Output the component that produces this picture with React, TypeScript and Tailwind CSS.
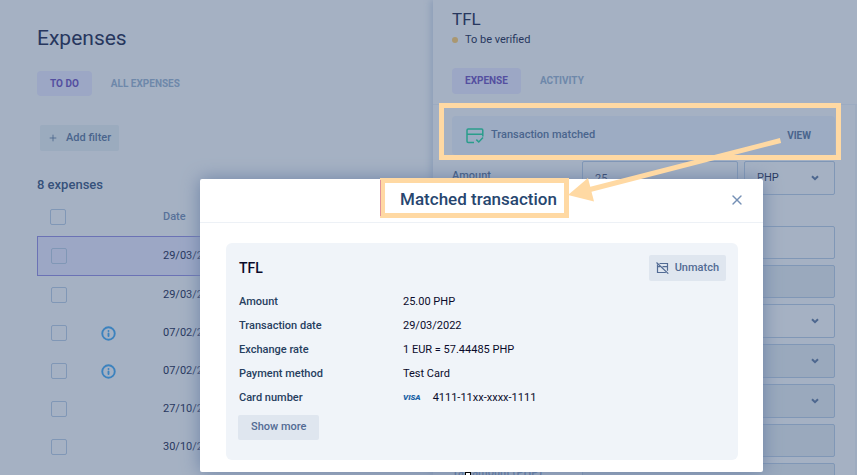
import React from 'react'
import { FiInfo, FiPlus, FiX } from 'react-icons/fi'

const expenses = [
  { id: 1, date: '29/03/2022', info: false, selected: true },
  { id: 2, date: '29/03/2022', info: false, selected: false },
  { id: 3, date: '07/02/2022', info: true, selected: false },
  { id: 4, date: '07/02/2022', info: true, selected: false },
  { id: 5, date: '27/10/2021', info: false, selected: false },
  { id: 6, date: '30/10/2021', info: false, selected: false },
]

const details = [
  { label: 'Amount', value: '25.00 PHP' },
  { label: 'Transaction date', value: '29/03/2022' },
  { label: 'Exchange rate', value: '1 EUR = 57.44485 PHP' },
  { label: 'Payment method', value: 'Test Card' },
]

const fields = [
  { id: 'merchant', name: 'Merchant', type: 'input', muted: false },
  { id: 'country', name: 'Country', type: 'input', muted: true },
  { id: 'category', name: 'Category', type: 'select', muted: false },
  { id: 'project', name: 'Project', type: 'select', muted: true },
  { id: 'tax', name: 'Tax rate', type: 'select', muted: true },
  { id: 'net', name: 'Net amount', type: 'input', muted: true },
]

function Checkbox({ label }: { label: string }) {
  return (
    <input
      type="checkbox"
      aria-label={label}
      className="block size-4 appearance-none rounded-xs border border-[#8097b6]"
    />
  )
}

interface SelectProps {
  id: string
  label: string
  value?: string
  muted: boolean
}

function Select({ id, label, value = '', muted }: SelectProps) {
  return (
    <div className="relative w-full">
      <select
        id={id}
        aria-label={label}
        className={`block h-[34px] w-full appearance-none rounded-xs border border-[#8097b6] px-3 text-[11px] text-[#27375e] ${muted ? 'bg-[#9aa9bd]' : ''}`}
      >
        <option>{value}</option>
      </select>
      <svg
        width="8"
        height="6"
        viewBox="0 0 8 6"
        fill="none"
        stroke="#4d678f"
        strokeWidth="2"
        className="pointer-events-none absolute top-[14px] right-4"
      >
        <path d="M1 1.200L4 4.200L7 1.200" />
      </svg>
    </div>
  )
}

function ExpenseList() {
  return (
    <main className="flex min-w-0 flex-1 flex-col pt-6 pl-[37px]">
      <h1 className="text-[21px] leading-7 text-[#27375e]">Expenses</h1>
      <nav className="mt-[19px] flex items-center gap-[6px] text-[10px] leading-[25px] font-bold">
        <button className="rounded-sm bg-[#9ca7c5] px-[13px] text-[#544fa0]">TO DO</button>
        <button className="px-[13px] text-[#6e88aa]">ALL EXPENSES</button>
      </nav>
      <button className="mt-[29px] ml-[3px] flex h-[26px] items-center gap-2 self-start rounded-xs bg-[#9babbe] px-2 text-[11px] font-medium text-[#4a658d]">
        <FiPlus size={10} />
        Add filter
      </button>
      <p className="mt-[25px] text-[13px] leading-[18px] font-medium text-[#36517b]">8 expenses</p>

      <table className="mt-1 w-full table-fixed border-collapse text-left text-[11px]">
        <colgroup>
          <col className="w-[64px]" />
          <col className="w-[62px]" />
          <col />
        </colgroup>
        <thead>
          <tr className="h-[38px]">
            <th className="pl-[13px]"><Checkbox label="Select all expenses" /></th>
            <th></th>
            <th className="font-medium text-[#58719a]">Date</th>
          </tr>
        </thead>
        <tbody>
          {expenses.map((e) => (
            <tr
              key={e.id}
              className={e.selected ? 'h-10 bg-[#9ca7c5] outline outline-1 -outline-offset-1 outline-[#6b72b5]' : 'h-[38px]'}
            >
              <td className="pl-[14px]"><Checkbox label={`Select expense ${e.id}`} /></td>
              <td>{e.info && <FiInfo size={15} strokeWidth={3} className="text-[#3c82be]" />}</td>
              <td className="text-[#27375e]">{e.date}</td>
            </tr>
          ))}
        </tbody>
      </table>
    </main>
  )
}

function MatchedIcon() {
  return (
    <svg width="18" height="16" viewBox="0 0 18 16" fill="none" stroke="#2a9d8c" strokeWidth="1.5">
      <path d="M8 14.5H2.2Q1 14.5 1 13.3V2.2Q1 1 2.2 1H15.6Q16.8 1 16.8 2.2V8.5M1 6.2H16.8" />
      <path d="M10.3 11.6L12.8 14L17 9.6" />
    </svg>
  )
}

function ExpensePanel() {
  return (
    <aside className="w-[424px] shrink-0 bg-[#a5b1c3] shadow-[-3px_0_6px_#8fa0b9]">
      <header className="border-b border-[#9cabc1] px-[19px] pt-[7px] pb-[10px]">
        <h2 className="text-[17px] leading-6 text-[#27375e]">TFL</h2>
        <p className="flex items-center gap-[7px] text-[11px] leading-[18px] text-[#27375e]">
          <span className="size-[6px] rounded-full bg-[#aa9770]" />
          To be verified
        </p>
        <nav className="mt-[19px] flex items-center gap-[6px] text-[10px] leading-[26px] font-bold">
          <button className="rounded-sm bg-[#9ca7c5] px-[13px] text-[#544fa0]">EXPENSE</button>
          <button className="px-[13px] text-[#6e88aa]">ACTIVITY</button>
        </nav>
      </header>

      <div className="border-r-2 border-[#9eacc0] pt-[11px] pr-5 pl-[19px]">
        <div className="flex h-[39px] items-center rounded-sm bg-[#9dacc3] pr-6 pl-[14px] text-[11px] font-medium text-[#4a658d]">
          <MatchedIcon />
          <span className="ml-[7px]">Transaction matched</span>
          <button className="ml-auto text-[10px] font-bold">VIEW</button>
        </div>

        <div className="mt-[6px] flex items-start">
          <label htmlFor="amount" className="w-[130px] shrink-0 pt-[7px] text-[11px] font-medium text-[#36517b]">Amount</label>
          <div className="flex min-w-0 flex-1 gap-[6px]">
            <input
              id="amount"
              defaultValue="25"
              className="h-[34px] min-w-0 flex-1 rounded-xs border border-[#8097b6] px-3 text-[11px] text-[#27375e]"
            />
            <div className="w-[91px] shrink-0">
              <Select id="currency" label="Currency" value="PHP" muted={false} />
            </div>
          </div>
        </div>

        <div className="mt-[31px] ml-[130px] flex flex-col gap-[6px]">
          {fields.map((f) =>
            f.type === 'select' ? (
              <Select key={f.id} id={f.id} label={f.name} muted={f.muted} />
            ) : (
              <input
                key={f.id}
                id={f.id}
                aria-label={f.name}
                className={`h-[33px] w-full rounded-xs border border-[#8097b6] px-3 text-[11px] ${f.muted ? 'bg-[#9aa9bd]' : ''}`}
              />
            ),
          )}
        </div>
        <div className="mt-[6px] flex items-start">
          <label htmlFor="taxAmount" className="w-[130px] shrink-0 pt-[2px] text-[11px] font-medium text-[#58719a]">Tax amount (PHP)</label>
          <input
            id="taxAmount"
            className="h-[33px] min-w-0 flex-1 rounded-xs border border-[#8097b6] bg-[#9aa9bd] px-3 text-[11px]"
          />
        </div>
      </div>
    </aside>
  )
}

function UnmatchIcon() {
  return (
    <svg width="13" height="12" viewBox="0 0 13 12" fill="none" stroke="currentColor" strokeWidth="1.2">
      <path d="M3.5 1.5H11.5V8.8M6.5 4.6H11.5M1.5 2.5V10.5H9.8M1.5 4.6H4M0.5 0.5L12.3 11.6" />
    </svg>
  )
}

function MatchedModal() {
  return (
    <div
      role="dialog"
      aria-labelledby="modal-title"
      className="w-[563px] rounded-xs bg-white pb-3 shadow-[0_0_18px_#6d83a6]"
    >
      <header className="relative flex h-11 items-center justify-center border-b border-[#edf1f6] pr-[6px] pb-1">
        <h2 id="modal-title" className="text-[17px] leading-6 font-medium text-[#27466f]">Matched transaction</h2>
        <button aria-label="Close" className="absolute top-[13px] right-[18px] text-[#7590b5]">
          <FiX size={16} />
        </button>
      </header>

      <section className="mt-5 mr-[25px] ml-[26px] rounded-md bg-[#f0f4f9] px-3 pt-3 pb-5">
        <div className="flex items-center justify-between pl-px">
          <h3 className="text-sm font-medium text-[#0a0b2b]">TFL</h3>
          <button className="flex h-[26px] items-center gap-[6px] rounded-xs bg-[#dfe6ef] px-[7px] text-[11px] font-medium text-[#526b94]">
            <UnmatchIcon />
            Unmatch
          </button>
        </div>
        <dl className="mt-[9px] grid grid-cols-[164px_1fr] pl-px text-[11px] leading-6">
          {details.map((d) => (
            <React.Fragment key={d.label}>
              <dt className="font-medium text-[#27405f]">{d.label}</dt>
              <dd className="text-[#0a0b2b]">{d.value}</dd>
            </React.Fragment>
          ))}
          <dt className="font-medium text-[#27405f]">Card number</dt>
          <dd className="flex items-center gap-3 text-[#0a0b2b]">
            <span className="text-[8px] font-black text-[#1a62a5] italic">VISA</span>
            4111-11xx-xxxx-1111
          </dd>
        </dl>
        <button className="mt-[5px] block h-[25px] rounded-xs bg-[#dfe6ef] px-[13px] text-[11px] font-medium text-[#526b94]">
          Show more
        </button>
      </section>
    </div>
  )
}

// highlight boxes and the arrow drawn over the page
function Annotations() {
  return (
    <div className="pointer-events-none absolute inset-0">
      <div className="absolute top-[103px] left-[439px] h-[57px] w-[402px] border-5 border-[#ffd9a3]" />
      <div className="absolute top-[178px] left-[380px] h-10 w-[189px] border-5 border-[#ffd9a3]" />
      <div className="absolute top-[180px] left-[380px] h-9 w-px bg-[#e0919c]" />
      <svg className="absolute top-[130px] left-[560px]" width="230" height="80" viewBox="560 130 230 80">
        <path d="M780.5 140.5L588 190" stroke="#ffd9a3" strokeWidth="5" />
        <path d="M568 195L588 178L594 201.500Z" fill="#ffd9a3" />
      </svg>
      <div className="absolute top-[472px] left-[465px] size-[6px] border border-black bg-white" />
    </div>
  )
}

export default function App() {
  return (
    <div className="relative flex h-screen overflow-hidden bg-[#a5b1c3] font-['Roboto',sans-serif]">
      <ExpenseList />
      <ExpensePanel />
      <div className="absolute inset-0 flex items-start justify-end pt-[179px] pr-[94px]">
        <MatchedModal />
      </div>
      <Annotations />
    </div>
  )
}
